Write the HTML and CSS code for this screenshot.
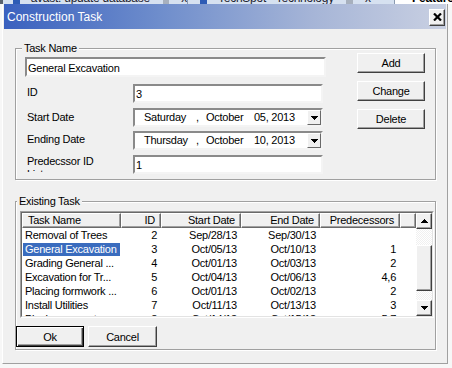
FILE: index.html
```html
<!DOCTYPE html>
<html lang="en">
<head>
  <meta charset="UTF-8" />
  <title>Construction Task</title>
  <link rel="stylesheet" href="styles.css">
</head>
<body>

  <!-- browser tabs peeking out above the dialog -->
  <div class="tabs">
    <div class="tab first">
      <span class="ticon blue"></span>
      <span class="ttext">avast! update database -</span>
      <span class="ticon gray"></span>
      <span class="tclose">x</span>
    </div>
    <div class="tab second">
      <span class="ticon blue"></span>
      <span class="ttext">TechSpot - Technology</span>
      <span class="ticon gray"></span>
      <span class="tclose">x</span>
    </div>
    <div class="tab-rest"><span>Feature</span></div>
  </div>

  <div class="window">
    <div class="titlebar">
      <span class="title">Construction Task</span>
      <button class="close">
        <svg width="9" height="8" viewBox="0 0 9 8"><path d="M1 0.5L8 7.5M8 0.5L1 7.5" stroke="#000" stroke-width="2.2"/></svg>
      </button>
    </div>

    <div class="dialog-body">
      <!-- Task details -->
      <fieldset class="group task-group">
        <legend>Task Name</legend>
        <div class="task-layout">
          <div class="fields">
            <div class="field name">General Excavation</div>

            <div class="row row-id">
              <label>ID</label>
              <div class="field">3</div>
            </div>

            <div class="row row-start">
              <label>Start Date</label>
              <div class="field date">
                <span class="d-day">Saturday</span>
                <span class="d-comma">,</span>
                <span class="d-month">October</span>
                <span class="d-num">05, 2013</span>
                <span class="drop">
                  <svg width="7" height="4" viewBox="0 0 7 4"><path d="M0 0h7v1H0zM1 1h5v1H1zM2 2h3v1H2zM3 3h1v1H3z"/></svg>
                </span>
              </div>
            </div>

            <div class="row row-end">
              <label>Ending Date</label>
              <div class="field date">
                <span class="d-day">Thursday</span>
                <span class="d-comma">,</span>
                <span class="d-month">October</span>
                <span class="d-num">10, 2013</span>
                <span class="drop">
                  <svg width="7" height="4" viewBox="0 0 7 4"><path d="M0 0h7v1H0zM1 1h5v1H1zM2 2h3v1H2zM3 3h1v1H3z"/></svg>
                </span>
              </div>
            </div>

            <div class="row row-pred">
              <label class="pred-label">Predecssor ID List</label>
              <div class="field">1</div>
            </div>
          </div>

          <div class="actions">
            <button class="btn">Add</button>
            <button class="btn">Change</button>
            <button class="btn">Delete</button>
          </div>
        </div>
      </fieldset>

      <!-- Existing tasks list -->
      <fieldset class="group list-group">
        <legend>Existing Task</legend>
        <div class="list">
          <div class="list-inner">
            <div class="grid">
              <div class="hrow">
                <div class="hcell c-name">Task Name</div>
                <div class="hcell c-id">ID</div>
                <div class="hcell c-start">Start Date</div>
                <div class="hcell c-end">End Date</div>
                <div class="hcell c-pred">Predecessors</div>
                <div class="hcell c-fill"></div>
              </div>
              <div class="drow">
                <div class="cell c-name"><span>Removal of Trees</span></div>
                <div class="cell c-id">2</div>
                <div class="cell c-start">Sep/28/13</div>
                <div class="cell c-end">Sep/30/13</div>
                <div class="cell c-pred"></div>
              </div>
              <div class="drow">
                <div class="cell c-name"><span class="sel">General Excavation</span></div>
                <div class="cell c-id">3</div>
                <div class="cell c-start">Oct/05/13</div>
                <div class="cell c-end">Oct/10/13</div>
                <div class="cell c-pred">1</div>
              </div>
              <div class="drow">
                <div class="cell c-name"><span>Grading General ...</span></div>
                <div class="cell c-id">4</div>
                <div class="cell c-start">Oct/01/13</div>
                <div class="cell c-end">Oct/03/13</div>
                <div class="cell c-pred">2</div>
              </div>
              <div class="drow">
                <div class="cell c-name"><span>Excavation for Tr...</span></div>
                <div class="cell c-id">5</div>
                <div class="cell c-start">Oct/04/13</div>
                <div class="cell c-end">Oct/06/13</div>
                <div class="cell c-pred">4,6</div>
              </div>
              <div class="drow">
                <div class="cell c-name"><span>Placing formwork ...</span></div>
                <div class="cell c-id">6</div>
                <div class="cell c-start">Oct/01/13</div>
                <div class="cell c-end">Oct/02/13</div>
                <div class="cell c-pred">2</div>
              </div>
              <div class="drow">
                <div class="cell c-name"><span>Install Utilities</span></div>
                <div class="cell c-id">7</div>
                <div class="cell c-start">Oct/11/13</div>
                <div class="cell c-end">Oct/13/13</div>
                <div class="cell c-pred">3</div>
              </div>
              <div class="drow">
                <div class="cell c-name"><span>Placing concrete ...</span></div>
                <div class="cell c-id">8</div>
                <div class="cell c-start">Oct/14/13</div>
                <div class="cell c-end">Oct/15/13</div>
                <div class="cell c-pred">5,7</div>
              </div>
            </div>

            <div class="vscroll">
              <div class="sbtn">
                <svg width="7" height="4" viewBox="0 0 7 4"><path d="M3 0h1v1H3zM2 1h3v1H2zM1 2h5v1H1zM0 3h7v1H0z"/></svg>
              </div>
              <div class="track">
                <div class="thumb"></div>
              </div>
              <div class="sbtn">
                <svg width="7" height="4" viewBox="0 0 7 4"><path d="M0 0h7v1H0zM1 1h5v1H1zM2 2h3v1H2zM3 3h1v1H3z"/></svg>
              </div>
            </div>
          </div>
        </div>

        <div class="bottom-buttons">
          <button class="btn default">Ok</button>
          <button class="btn">Cancel</button>
        </div>
      </fieldset>
    </div>
  </div>

</body>
</html>
```

FILE: styles.css
```css
* {
  box-sizing: border-box;
}

body {
  margin: 0;
  width: 452px;
  height: 368px;
  overflow: hidden;
  background: #f7f7f7;
  font-family: "Liberation Sans", Arial, sans-serif;
  font-size: 11px;
  letter-spacing: -0.25px;
  color: #000;
}

/* Browser tabs strip */
.tabs {
  display: flex;
  height: 4px;
  overflow: hidden;
  background: #fff;
}

.tab {
  display: flex;
  align-items: flex-start;
  height: 4px;
  overflow: hidden;
  background: #d6e1f0;
  border-right: 1px solid #8a9ab0;
}

.tab.first {
  width: 188px;
  padding-left: 10px;
  border-left: 3px solid #59626f;
}

.tab.second {
  width: 207px;
  padding-left: 12px;
}

.tab > span,
.tab-rest > span {
  margin-top: -8px;
  line-height: 12px;
  font-size: 12px;
  color: #1e2430;
}

.ticon {
  display: inline-block;
  width: 7px;
  height: 12px;
}

.ticon.blue {
  background: #2d5bb5;
  margin-right: 11px;
}

.ticon.gray {
  background: #a7b0bd;
  margin-left: 12px;
  margin-right: 12px;
}

.tab-rest {
  display: flex;
  align-items: flex-start;
  flex: 1;
  height: 4px;
  overflow: hidden;
  padding-left: 17px;
}

.tab-rest > span {
  font-weight: bold;
  color: #000;
}

/* Dialog window */
.window {
  width: 446px;
  height: 360px;
  margin-left: 2px;
  background: #f0f0f0;
  border-left: 1px solid #fff;
  border-right: 1px solid #a0a0a0;
  border-bottom: 1px solid #a0a0a0;
}

.titlebar {
  display: flex;
  align-items: center;
  justify-content: space-between;
  height: 25px;
  margin: 0 1px;
  padding: 0 1px 0 3px;
  background: linear-gradient(to right, #3a61bf 0%, #6e8dcc 35%, #a6b5d7 70%, #c9d0e2 100%);
}

.title {
  color: #fff;
  font-size: 12px;
  letter-spacing: 0;
}

.close {
  width: 16px;
  height: 17px;
  margin-top: 1px;
  padding: 0;
  display: flex;
  align-items: center;
  justify-content: center;
  background: #f0f0f0;
  border: 1px solid;
  border-color: #fff #404040 #404040 #fff;
  box-shadow: inset -1px -1px 0 #a0a0a0;
}

.dialog-body {
  padding-top: 13px;
}

/* Group boxes */
.group {
  margin: 0 11px 0 12px;
  min-width: 0;
  border: 1px solid #a0a0a0;
  box-shadow: inset 1px 1px 0 #fff, 1px 1px 0 #fff;
}

.group legend {
  margin-left: -3px;
  padding: 0 2px;
  line-height: 13px;
  background: #f0f0f0;
}

.task-group {
  padding: 2px 10px 5px 9px;
}

.task-layout {
  display: flex;
  justify-content: space-between;
}

.fields {
  width: 301px;
}

.field {
  height: 19px;
  padding: 1px 0 0 1px;
  background: #fff;
  border: 2px solid;
  border-color: #8a8a8a #f4f4f4 #f4f4f4 #8a8a8a;
  line-height: 14px;
  white-space: nowrap;
  overflow: hidden;
}

.field.name {
  width: 301px;
  height: 20px;
  padding-top: 2px;
}

.row {
  display: flex;
  align-items: flex-start;
}

.row label {
  width: 108px;
  padding: 2px 0 0 2px;
  line-height: 13px;
}

.row .field {
  width: 190px;
}

.row-id {
  margin-top: 7px;
}

.row-start {
  margin-top: 5px;
}

.row-start label {
  padding-top: 3px;
}

.row-end {
  margin-top: 4px;
}

.row-pred {
  margin-top: 5px;
}

.row .pred-label {
  width: 80px;
  margin-right: 28px;
  height: 17px;
  padding-top: 0;
  overflow: hidden;
}

/* Date picker */
.date {
  display: flex;
  padding: 0;
  line-height: 15px;
}

.d-day {
  width: 52px;
  padding-left: 9px;
  box-sizing: content-box;
}

.d-comma {
  width: 10px;
}

.d-month {
  width: 48px;
}

.d-num {
  flex: 1;
}

.drop {
  width: 14px;
  height: 15px;
  display: flex;
  align-items: center;
  justify-content: center;
  background: #f0f0f0;
  border: 1px solid;
  border-color: #fff #696969 #696969 #fff;
}

/* Buttons */
.actions {
  display: flex;
  flex-direction: column;
  width: 68px;
  margin-top: -4px;
}

.actions .btn + .btn {
  margin-top: 8px;
}

.btn {
  height: 20px;
  padding: 0;
  font-family: inherit;
  font-size: 11px;
  letter-spacing: -0.25px;
  color: #000;
  background: #f0f0f0;
  border: 1px solid;
  border-color: #fff #404040 #404040 #fff;
  box-shadow: inset -1px -1px 0 #a0a0a0;
}

/* Existing task list */
.list-group {
  margin-top: 15px;
  padding: 3px 1px 2px 4px;
}

.list {
  width: 414px;
  border: 1px solid;
  border-color: #a0a0a0 #fff #fff #a0a0a0;
}

.list-inner {
  display: flex;
  height: 105px;
  border: 1px solid;
  border-color: #696969 #e3e3e3 #e3e3e3 #696969;
  background: #fff;
  overflow: hidden;
}

.grid {
  width: 394px;
}

.hrow,
.drow {
  display: flex;
}

.hcell {
  height: 15px;
  padding: 0 5px;
  line-height: 13px;
  text-align: right;
  background: #f0f0f0;
  border: 1px solid;
  border-color: #fff #696969 #696969 #fff;
  box-shadow: inset -1px -1px 0 #a0a0a0;
  white-space: nowrap;
}

.hcell.c-name {
  text-align: left;
}

.c-name { width: 99px; }
.c-id { width: 40px; }
.c-start { width: 80px; }
.c-end { width: 79px; }
.c-pred { width: 80px; }
.c-fill { width: 16px; }

.drow {
  height: 14px;
  line-height: 14px;
}

.cell {
  padding-right: 4px;
  text-align: right;
  white-space: nowrap;
  overflow: hidden;
}

.cell.c-name {
  padding: 0 0 0 1px;
  text-align: left;
}

.cell.c-name span {
  display: inline-block;
  width: 97px;
  padding-left: 2px;
  line-height: 13px;
  margin-top: 1px;
  vertical-align: top;
}

.cell.c-name .sel {
  background: #3a6cbe;
  color: #fff;
}

/* Vertical scrollbar */
.vscroll {
  width: 16px;
  display: flex;
  flex-direction: column;
}

.sbtn {
  height: 16px;
  display: flex;
  align-items: center;
  justify-content: center;
  background: #f0f0f0;
  border: 1px solid;
  border-color: #fff #404040 #404040 #fff;
  box-shadow: inset -1px -1px 0 #a0a0a0;
}

.track {
  flex: 1;
  padding-top: 16px;
  background: repeating-conic-gradient(#f0f0f0 0 25%, #fff 0 50%) 0 0 / 2px 2px;
}

.thumb {
  height: 46px;
  background: #f0f0f0;
  border: 1px solid;
  border-color: #fff #404040 #404040 #fff;
  box-shadow: inset -1px -1px 0 #a0a0a0;
}

.bottom-buttons {
  display: flex;
  margin: 8px 0 0 -4px;
}

.bottom-buttons .btn {
  width: 69px;
  height: 21px;
}

.bottom-buttons .btn + .btn {
  margin-left: 4px;
  width: 69px;
}

.btn.default {
  width: 68px;
  border: 1px solid #000;
  box-shadow: inset 1px 1px 0 #fff, inset -1px -1px 0 #404040, inset -2px -2px 0 #a0a0a0;
}
```
